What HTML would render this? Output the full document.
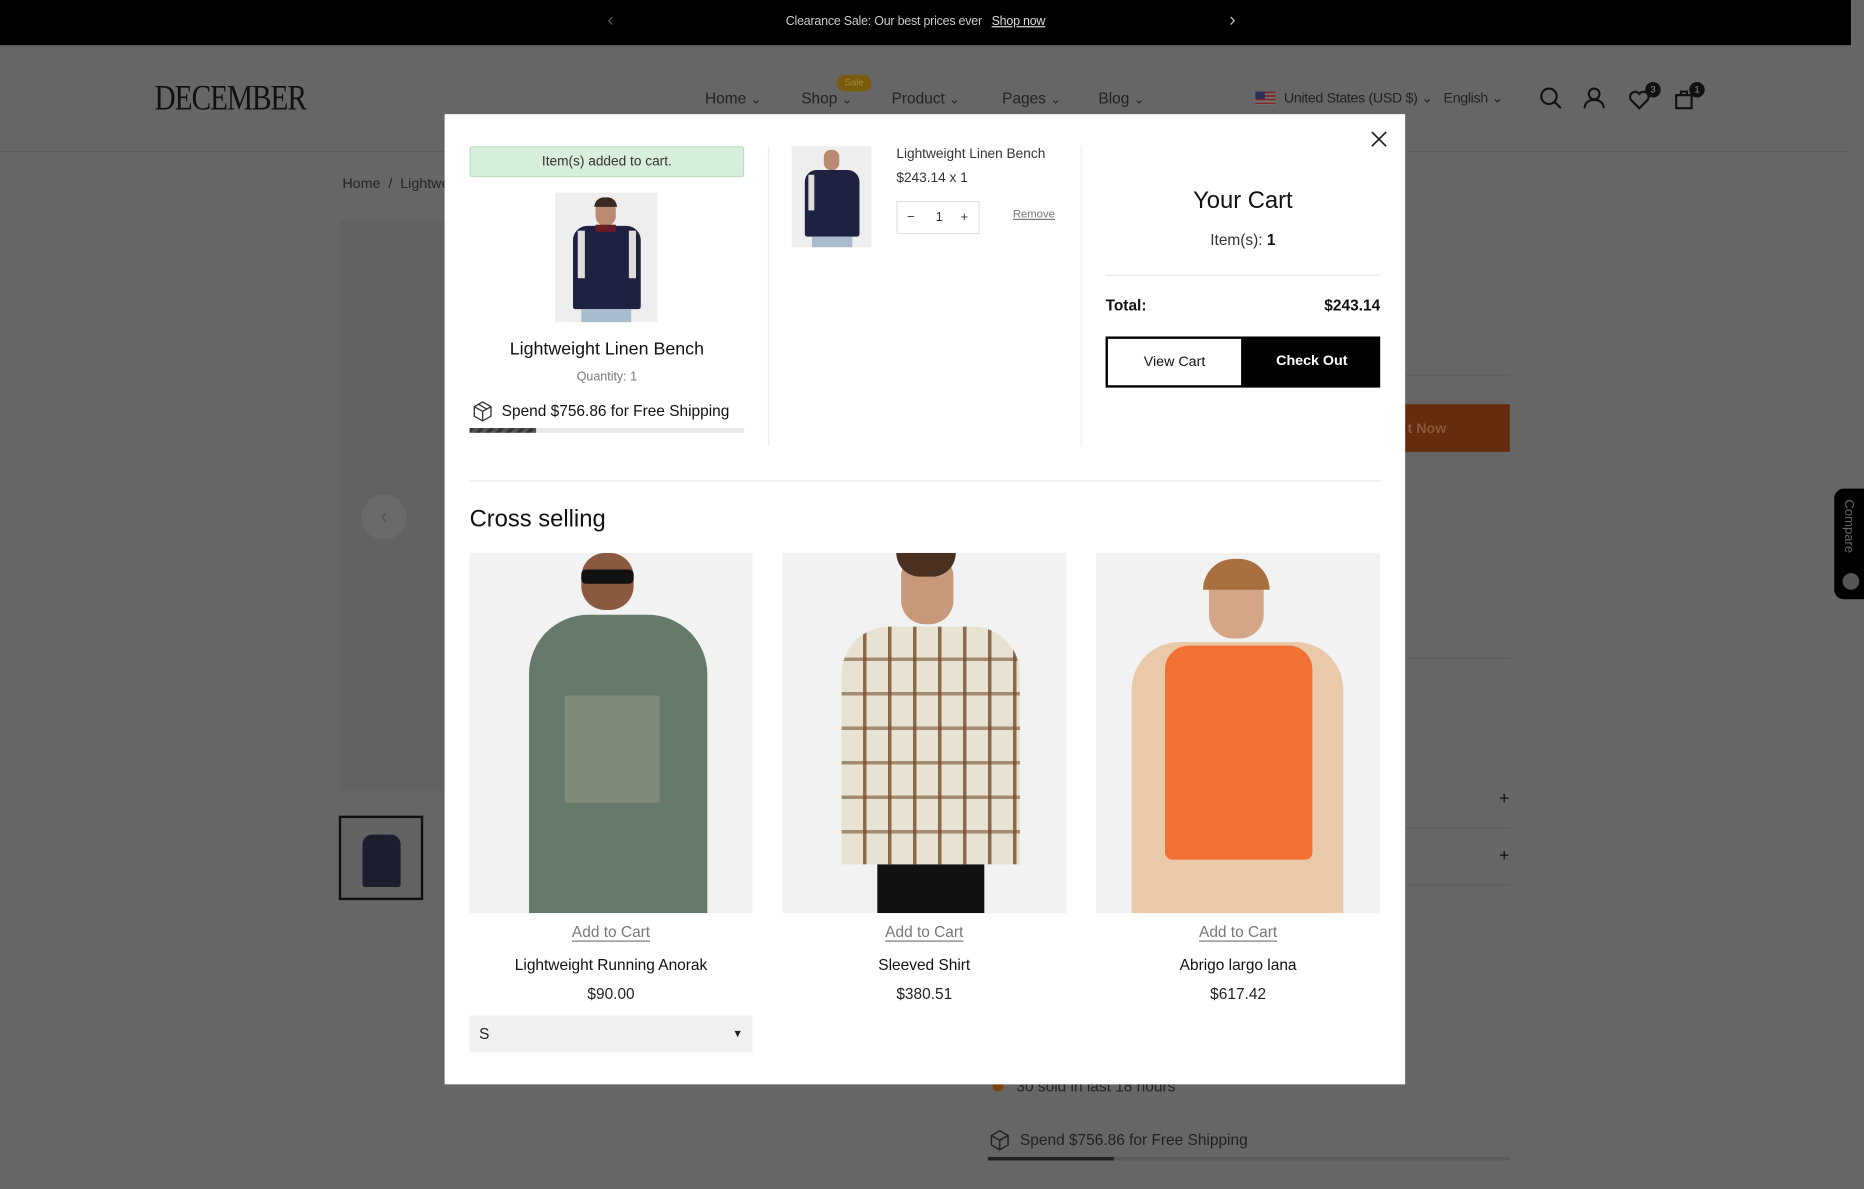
<!DOCTYPE html>
<html><head><meta charset="utf-8">
<style>
*{margin:0;padding:0;box-sizing:border-box}
html,body{width:1864px;height:1189px;overflow:hidden;background:#666}
#w{position:absolute;left:0;top:0;width:1568px;height:1000px;transform:scale(1.18878,1.189);transform-origin:0 0;font-family:"Liberation Sans",sans-serif;color:#222}
.a{position:absolute}
.t{position:absolute;white-space:nowrap}
.ln{position:absolute;height:1px;background:#5c5c5c}
.m{position:absolute;left:374px;top:96px;width:808px;height:816px;background:#fff}
.btnu{text-decoration:underline;text-underline-offset:3px}
</style></head><body><div id="w">
<div class="a" style="left:0;top:0;width:1557px;height:38px;background:#000"></div>
<div class="t" style="left:511px;top:9px;color:#555;font-size:16px">&#x2039;</div>
<div class="t" style="left:1034px;top:9px;color:#bbb;font-size:16px">&#x203A;</div>
<div class="t" style="left:661px;top:12px;color:#ccc;font-size:10.5px;letter-spacing:-.2px">Clearance Sale: Our best prices ever &nbsp;&nbsp;<span style="color:#ddd;text-decoration:underline">Shop now</span></div>
<div class="t" style="left:130px;top:66px;font-family:'Liberation Serif',serif;font-size:30px;color:#111;letter-spacing:-1px;transform:scaleX(.82);transform-origin:0 0">DECEMBER</div>
<div class="a" style="left:704px;top:63px;width:29px;height:14px;border-radius:7px;background:#7a5a0c;color:#a98a3a;font-size:8px;text-align:center;line-height:14px">Sale</div>
<div class="t" style="left:593px;top:75px;font-size:13px;color:#222">Home <small>⌄</small></div>
<div class="t" style="left:674px;top:75px;font-size:13px;color:#222">Shop <small>⌄</small></div>
<div class="t" style="left:750px;top:75px;font-size:13px;color:#222">Product <small>⌄</small></div>
<div class="t" style="left:843px;top:75px;font-size:13px;color:#222">Pages <small>⌄</small></div>
<div class="t" style="left:924px;top:75px;font-size:13px;color:#222">Blog <small>⌄</small></div>
<div class="a" style="left:1056px;top:77px;width:17px;height:11px;background:repeating-linear-gradient(#7a2a2a 0 1.5px,#777 1.5px 3px)"><div class="a" style="left:0;top:0;width:8px;height:6px;background:#2a2f55"></div></div>
<div class="t" style="left:1080px;top:75px;font-size:12px;color:#222;letter-spacing:-.3px">United States (USD $) ⌄ &nbsp;&nbsp;English ⌄</div>
<svg class="a" style="left:1294px;top:72px" width="140" height="22" fill="none" stroke="#111" stroke-width="1.8">
<circle cx="9" cy="9" r="6.5"/><path d="M14 14l5 5"/>
<circle cx="47" cy="7" r="4.5"/><path d="M39 19c0-5 4-7 8-7s8 2 8 7"/>
<path d="M85 19l-7-7a4 4 0 0 1 7-5 4 4 0 0 1 7 5z"/>
<path d="M116 8h13v11h-13z M120 8v-3h5v3"/>
</svg>
<div class="a" style="left:1384px;top:69px;width:13px;height:13px;border-radius:50%;background:#111;color:#888;font-size:8px;text-align:center;line-height:13px">3</div>
<div class="a" style="left:1421px;top:69px;width:13px;height:13px;border-radius:50%;background:#111;color:#888;font-size:8px;text-align:center;line-height:13px">1</div>
<div class="ln" style="left:0;top:127px;width:1557px"></div>
<div class="t" style="left:288px;top:147px;font-size:12px;color:#222">Home &nbsp;/&nbsp; Lightweight</div>
<div class="a" style="left:286px;top:186px;width:100px;height:479px;background:#626262"></div>
<div class="a" style="left:304px;top:416px;width:38px;height:38px;border-radius:50%;background:#6a6a6a;color:#555;text-align:center;line-height:36px;font-size:18px">&#x2039;</div>
<div class="a" style="left:285px;top:686px;width:71px;height:71px;border:2px solid #111;background:#626262"><div class="a" style="left:18px;top:14px;width:32px;height:44px;background:#1c1e2e;border-radius:8px 8px 2px 2px"></div></div>
<div class="ln" style="left:1182px;top:315px;width:88px"></div>
<div class="a" style="left:1182px;top:340px;width:88px;height:40px;background:#662a0c;color:#8a5a3a;font-size:12px;font-weight:bold;line-height:40px;padding-left:2px">t Now</div>
<div class="ln" style="left:1182px;top:553px;width:88px"></div>
<div class="t" style="left:1261px;top:663px;font-size:15px;color:#111">+</div>
<div class="ln" style="left:1182px;top:696px;width:88px"></div>
<div class="t" style="left:1261px;top:711px;font-size:15px;color:#111">+</div>
<div class="ln" style="left:1182px;top:744px;width:88px"></div>
<div class="a" style="left:1543px;top:411px;width:25px;height:93px;background:#000;border-radius:8px 0 0 8px"></div>
<div class="t" style="left:1549px;top:420px;color:#666;font-size:11px;writing-mode:vertical-rl">Compare</div>
<div class="a" style="left:1550px;top:482px;width:14px;height:14px;border-radius:50%;background:#555"></div>
<div class="a" style="left:835px;top:909px;width:9px;height:9px;border-radius:50%;background:#7a4010"></div>
<div class="t" style="left:855px;top:906px;font-size:13px;color:#222">30 sold in last 18 hours</div>
<div class="t" style="left:858px;top:951px;font-size:13px;color:#222">Spend $756.86 for Free Shipping</div>
<svg class="a" style="left:832px;top:950px" width="18" height="18" fill="none" stroke="#222" stroke-width="1.2"><path d="M9 1l7 4v8l-7 4-7-4V5z M2 5l7 4 7-4 M9 9v8"/></svg>
<div class="a" style="left:831px;top:973px;width:439px;height:3px;background:#5a5a5a"><div style="width:106px;height:3px;background:#222"></div></div>

<div class="m"></div>
<div class="a" style="left:395px;top:123px;width:231px;height:26px;background:#d8efdb;border:1px solid #b9dfbf;border-radius:2px;font-size:11.5px;color:#333;text-align:center;line-height:24px">Item(s) added to cart.</div>
<div class="a" style="left:467px;top:162px;width:86px;height:109px;background:#eee;overflow:hidden">
<div class="a" style="left:34px;top:6px;width:17px;height:22px;border-radius:8px;background:#b88a70"></div>
<div class="a" style="left:33px;top:4px;width:19px;height:8px;border-radius:8px 8px 0 0;background:#3a2a20"></div>
<div class="a" style="left:15px;top:28px;width:57px;height:70px;background:#1f2140;border-radius:12px 12px 2px 2px"></div>
<div class="a" style="left:19px;top:32px;width:6px;height:40px;background:#ddd"></div>
<div class="a" style="left:62px;top:32px;width:6px;height:40px;background:#ddd"></div>
<div class="a" style="left:34px;top:27px;width:17px;height:6px;background:#6a1a22"></div>
<div class="a" style="left:22px;top:98px;width:42px;height:11px;background:#a8bccd"></div></div>
<div class="t" style="left:395px;top:285px;width:231px;text-align:center;font-size:15px;color:#111">Lightweight Linen Bench</div>
<div class="t" style="left:395px;top:311px;width:231px;text-align:center;font-size:10.5px;color:#777">Quantity: 1</div>
<svg class="a" style="left:397px;top:337px" width="18" height="18" fill="none" stroke="#333" stroke-width="1.1"><path d="M9 1l7 4v8l-7 4-7-4V5z M2 5l7 4 7-4 M9 9v8 M5.5 3l7 4"/></svg>
<div class="t" style="left:422px;top:338px;font-size:13px;color:#111">Spend $756.86 for Free Shipping</div>
<div class="a" style="left:395px;top:360px;width:231px;height:4px;background:#e8e8e8"><div style="width:56px;height:4px;background:repeating-linear-gradient(135deg,#333 0 3px,#555 3px 6px)"></div></div>
<div class="a" style="left:646px;top:123px;width:1px;height:252px;background:#eee"></div>
<div class="a" style="left:909px;top:123px;width:1px;height:252px;background:#eee"></div>
<div class="a" style="left:666px;top:123px;width:67px;height:85px;background:#eee;overflow:hidden">
<div class="a" style="left:27px;top:3px;width:13px;height:17px;border-radius:6px;background:#b88a70"></div>
<div class="a" style="left:11px;top:20px;width:46px;height:56px;background:#1f2140;border-radius:10px 10px 2px 2px"></div>
<div class="a" style="left:14px;top:24px;width:5px;height:30px;background:#ddd"></div>
<div class="a" style="left:17px;top:76px;width:34px;height:9px;background:#a8bccd"></div></div>
<div class="t" style="left:754px;top:124px;font-size:11.5px;color:#333">Lightweight Linen Bench</div>
<div class="t" style="left:754px;top:144px;font-size:11.5px;color:#333">$243.14 x 1</div>
<div class="a" style="left:754px;top:169px;width:70px;height:28px;border:1px solid #e3e3e3;font-size:11px;color:#333;line-height:26px"><span class="a" style="left:8px">−</span><span class="a" style="left:32px">1</span><span class="a" style="left:53px">+</span></div>
<div class="t" style="left:852px;top:175px;font-size:9.5px;color:#777;text-decoration:underline">Remove</div>
<svg class="a" style="left:1153px;top:110px" width="14" height="14" stroke="#222" stroke-width="1.4"><path d="M1 1l12 12M13 1L1 13"/></svg>
<div class="t" style="left:930px;top:158px;width:231px;text-align:center;font-size:20px;color:#111">Your Cart</div>
<div class="t" style="left:930px;top:194px;width:231px;text-align:center;font-size:13px;color:#333">Item(s): <b style="color:#111">1</b></div>
<div class="a" style="left:930px;top:231px;width:231px;height:1px;background:#e6e6e6"></div>
<div class="t" style="left:930px;top:249px;font-size:13px;font-weight:bold;color:#111">Total:</div>
<div class="t" style="left:1060px;top:249px;width:101px;text-align:right;font-size:13px;font-weight:bold;color:#111">$243.14</div>
<div class="a" style="left:930px;top:283px;width:116px;height:43px;border:2px solid #000;font-size:12px;color:#111;text-align:center;line-height:39px">View Cart</div>
<div class="a" style="left:1046px;top:283px;width:115px;height:43px;background:#000;font-size:12px;font-weight:bold;color:#fff;text-align:center;line-height:40px">Check Out</div>
<div class="a" style="left:395px;top:404px;width:766px;height:1px;background:#e8e8e8"></div>
<div class="t" style="left:395px;top:426px;font-size:20px;color:#111">Cross selling</div>
<div class="a" style="left:395px;top:465px;width:238px;height:303px;background:#f1f2f1;overflow:hidden">
<div class="a" style="left:94px;top:0;width:44px;height:48px;border-radius:20px;background:#8a5a40"></div>
<div class="a" style="left:94px;top:14px;width:44px;height:12px;background:#111;border-radius:4px"></div>
<div class="a" style="left:50px;top:52px;width:150px;height:251px;background:#667a6c;border-radius:50px 50px 0 0"></div>
<div class="a" style="left:80px;top:120px;width:80px;height:90px;background:#7e8a78"></div>
</div>
<div class="a" style="left:658px;top:465px;width:239px;height:303px;background:#f1f2f1;overflow:hidden">
<div class="a" style="left:100px;top:0;width:44px;height:60px;border-radius:20px;background:#c8987a"></div>
<div class="a" style="left:96px;top:0;width:50px;height:20px;border-radius:0 0 20px 20px;background:#4a3020"></div>
<div class="a" style="left:50px;top:62px;width:150px;height:200px;border-radius:40px 40px 0 0;background:repeating-linear-gradient(90deg,#e8e2d2 0 18px,#8a6a4a 18px 21px),#e8e2d2"></div>
<div class="a" style="left:50px;top:62px;width:150px;height:200px;border-radius:40px 40px 0 0;background:repeating-linear-gradient(0deg,transparent 0 26px,rgba(120,80,50,.6) 26px 29px)"></div>
<div class="a" style="left:80px;top:262px;width:90px;height:41px;background:#111"></div>
</div>
<div class="a" style="left:922px;top:465px;width:239px;height:303px;background:#f1f2f1;overflow:hidden">
<div class="a" style="left:95px;top:10px;width:46px;height:62px;border-radius:20px;background:#d4a688"></div>
<div class="a" style="left:90px;top:5px;width:56px;height:26px;border-radius:26px 26px 0 0;background:#a8703e"></div>
<div class="a" style="left:30px;top:75px;width:178px;height:228px;border-radius:40px 40px 0 0;background:#e9c9a8"></div>
<div class="a" style="left:58px;top:78px;width:124px;height:180px;border-radius:20px 20px 6px 6px;background:#f27033"></div>
</div>
<div class="t btnu" style="left:395px;top:776px;width:238px;text-align:center;font-size:13px;color:#777">Add to Cart</div>
<div class="t btnu" style="left:658px;top:776px;width:239px;text-align:center;font-size:13px;color:#777">Add to Cart</div>
<div class="t btnu" style="left:922px;top:776px;width:239px;text-align:center;font-size:13px;color:#777">Add to Cart</div>
<div class="t" style="left:395px;top:804px;width:238px;text-align:center;font-size:13px;color:#111">Lightweight Running Anorak</div>
<div class="t" style="left:658px;top:804px;width:239px;text-align:center;font-size:13px;color:#111">Sleeved Shirt</div>
<div class="t" style="left:922px;top:804px;width:239px;text-align:center;font-size:13px;color:#111">Abrigo largo lana</div>
<div class="t" style="left:395px;top:828px;width:238px;text-align:center;font-size:13px;color:#222">$90.00</div>
<div class="t" style="left:658px;top:828px;width:239px;text-align:center;font-size:13px;color:#222">$380.51</div>
<div class="t" style="left:922px;top:828px;width:239px;text-align:center;font-size:13px;color:#222">$617.42</div>
<div class="a" style="left:395px;top:854px;width:238px;height:31px;background:#f0f0f0;font-size:13px;color:#222;line-height:31px;padding-left:8px">S<span class="a" style="right:8px;font-size:9px">▼</span></div>
</div></body></html>
